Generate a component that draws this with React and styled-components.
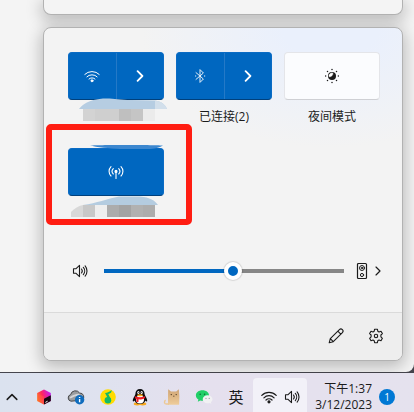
import React, { useState } from "react";
import styled, { createGlobalStyle, css } from "styled-components";

const GlobalStyle = createGlobalStyle`
  *, *::before, *::after { box-sizing: border-box; }
  body {
    margin: 0;
    overflow: hidden;
    color: #1b1b1b;
    font: 12px/16px "Open Sans", "Noto Sans CJK SC", sans-serif;
  }
  button, input { margin: 0; padding: 0; font: inherit; color: inherit; }
  svg { display: block; flex: none; }
`;

const Screen = styled.main`
  display: flex;
  flex-direction: column;
  height: 100vh;
  background: #45454d;
`;

const Desktop = styled.div`
  flex: 1;
  display: flex;
  flex-direction: column;
  gap: 12px;
  padding: 0 11px 11px 43px;
  margin-bottom: 1px;
  border-radius: 0 0 8px 0;
  background: #f4f4f4;
`;

const surface = css`
  border: 1px solid #b2b2b2;
  box-shadow: 0 4px 16px 2px rgba(0, 0, 0, 0.24);
`;

const UpperPanel = styled.div`
  ${surface}
  height: 15px;
  flex: none;
  border-top: 0;
  border-radius: 0 0 8px 8px;
  background: #f4f4f4;
`;

const Panel = styled.section`
  ${surface}
  flex: 1;
  display: flex;
  flex-direction: column;
  border-radius: 8px;
  background:
    radial-gradient(ellipse 190px 120px at 80% 0, #eaf0fc 25%, rgba(243, 243, 243, 0) 100%),
    #f3f3f3;
`;

const Tiles = styled.div`
  display: grid;
  grid-template-columns: repeat(3, 1fr);
  gap: 16px 12px;
  padding: 24px 22px 0 24px;
`;

const Cell = styled.div`
  position: relative;
  display: flex;
  flex-direction: column;
`;

const Tile = styled.div`
  display: flex;
  height: 48px;
  overflow: hidden;
  border-radius: 4px;
  border: 1px solid ${(p) => (p.$on ? "#0a6bc4" : "#e4e5e9")};
  border-bottom-color: ${(p) => (p.$on ? "#00407c" : "#cfd0d4")};
  background: ${(p) => (p.$on ? "#0067c0" : "#fbfcfe")};
  color: ${(p) => (p.$on ? "#ffffff" : "#1b1b1b")};
`;

const TileButton = styled.button`
  flex: 1;
  display: flex;
  align-items: center;
  justify-content: center;
  border: 0;
  background: none;

  & + & { border-left: 1px solid #2479c7; }
`;

const Label = styled.div`
  display: flex;
  align-items: center;
  justify-content: center;
  height: 32px;
  padding-top: 2px;
`;

const Smudge = styled.svg`
  position: absolute;
  left: 0;
  top: -4px;
  pointer-events: none;
`;

const Highlight = styled.div`
  position: absolute;
  inset: -24px -28px 3px -22px;
  border: 6px solid #ff1d12;
  border-radius: 5px;
  pointer-events: none;
`;

const VolumeRow = styled.div`
  flex: 1;
  display: flex;
  align-items: center;
  padding: 2px 20px 0 28px;
`;

const IconButton = styled.button`
  display: flex;
  align-items: center;
  justify-content: center;
  border: 0;
  background: none;
`;

const OutputButton = styled(IconButton)`
  gap: 6px;
`;

const Slider = styled.input`
  flex: 1;
  min-width: 0;
  height: 20px;
  margin: 0 12px 0 16px;
  appearance: none;
  background: linear-gradient(to right, #0067c0 54%, #868686 54%) center / 100% 4px no-repeat;

  &::-webkit-slider-thumb {
    appearance: none;
    width: 18px;
    height: 18px;
    border: 4px solid #ffffff;
    border-radius: 50%;
    background: #0067c0;
    box-shadow: 0 0 1px 1px rgba(0, 0, 0, 0.12);
  }
`;

const Footer = styled.footer`
  display: flex;
  align-items: center;
  justify-content: flex-end;
  gap: 24px;
  height: 48px;
  padding: 0 18px 2px 0;
  border-top: 1px solid #dadada;
  border-radius: 0 0 7px 7px;
  background: #eeeeee;
`;

const Taskbar = styled.footer`
  flex: none;
  display: flex;
  align-items: center;
  height: 39px;
  padding-top: 9px;
  background: linear-gradient(to right, #dbe2ef 0, #dfe2ef 25%, #e5e0ee 50%, #e5e2ee 100%);
`;

const Tray = styled.div`
  display: flex;
  align-items: center;
  gap: 8px;
`;

const TrayButton = styled(IconButton)`
  width: 24px;
  height: 24px;
  font-size: 15px;
`;

const StatusButton = styled(IconButton)`
  align-self: stretch;
  gap: 7px;
  width: 54px;
  margin: -4px 0 0 5px;
  padding-top: 4px;
  border-radius: 4px 4px 0 0;
  background: #f2f1f8;
`;

const Clock = styled.button`
  flex: 1;
  border: 0;
  background: none;
  text-align: right;
  white-space: nowrap;
`;

const ClockLine = styled.span`
  display: block;
`;

const Badge = styled.button`
  flex: none;
  width: 16px;
  height: 16px;
  margin: 0 19px 0 7px;
  border: 0;
  border-radius: 50%;
  background: #0078d4;
  color: #ffffff;
  font-size: 10px;
  line-height: 16px;
`;

const stroke = { fill: "none", stroke: "currentColor", strokeLinecap: "round", strokeLinejoin: "round" };

const WifiIcon = ({ weight = 1.2 }) => (
  <svg width="16" height="16" viewBox="0 0 16 16" {...stroke} strokeWidth={weight}>
    <path d="M.8 6.4a10.2 10.2 0 0 1 14.4 0M2.9 8.8a7.2 7.2 0 0 1 10.2 0M5 11a4.3 4.3 0 0 1 6 0" />
    <circle cx="8" cy="12.8" r="1" fill="currentColor" />
  </svg>
);

const ChevronIcon = ({ width = 8, height = 12, weight = 1.8 }) => (
  <svg width={width} height={height} viewBox="0 0 8 12" {...stroke} strokeWidth={weight}>
    <path d="M1.6 1.2 6.4 6l-4.8 4.8" />
  </svg>
);

const BluetoothIcon = () => (
  <svg width="14" height="16" viewBox="0 0 14 16" {...stroke} strokeWidth="1" opacity=".9">
    <path d="m3 4.6 7.4 6.4L7 14.4V1.6L10.4 5 3 11.4M2.4 8h.4M11.4 8h.4" />
  </svg>
);

const NightIcon = () => (
  <svg width="16" height="16" viewBox="0 0 16 16">
    <circle cx="8" cy="8" r="4" fill="#1b1b1b" />
    <path d="M5 8.6A3.1 3.1 0 0 1 8.800 5 3.100 3.100 0 0 1 5 8.600Z" fill="#fff" stroke="#fff" strokeWidth=".5" />
    <g fill="#1b1b1b">
      <circle cx="8" cy="1.6" r=".75" /><circle cx="8" cy="14.4" r=".75" />
      <circle cx="1.6" cy="8" r=".75" /><circle cx="14.4" cy="8" r=".75" />
      <circle cx="3.5" cy="3.5" r=".75" /><circle cx="12.5" cy="3.5" r=".75" />
      <circle cx="3.5" cy="12.5" r=".75" /><circle cx="12.5" cy="12.5" r=".75" />
    </g>
  </svg>
);

const HotspotIcon = () => (
  <svg width="16" height="16" viewBox="0 0 16 16" {...stroke} strokeWidth="1.1">
    <path d="M3 2.600a6.700 6.700 0 0 0 0 9.400M13 2.600a6.700 6.700 0 0 1 0 9.400M5.300 4.600a3.900 3.900 0 0 0 0 5.400M10.700 4.600a3.900 3.900 0 0 1 0 5.400M8 8v6.400" />
    <circle cx="8" cy="7.4" r="1" fill="currentColor" />
  </svg>
);

const SpeakerIcon = () => (
  <svg width="16" height="16" viewBox="0 0 16 16" {...stroke} strokeWidth="1.1">
    <path d="M1.5 5.8h2.3l3.7-3.4v11.2L3.8 10.2H1.5zM9.5 6a3.2 3.2 0 0 1 0 4M11.3 4.4a5.4 5.4 0 0 1 0 7.2M13.1 2.9a7.8 7.8 0 0 1 0 10.2" />
  </svg>
);

const OutputIcon = () => (
  <svg width="12" height="18" viewBox="0 0 12 18" {...stroke} strokeWidth="1">
    <rect x="1.5" y="1.5" width="9" height="15" rx="1" strokeWidth="1.2" />
    <circle cx="6" cy="6" r="2.5" /><circle cx="6" cy="6" r=".8" /><circle cx="6" cy="13" r="1.6" />
  </svg>
);

const PencilIcon = () => (
  <svg width="16" height="16" viewBox="0 0 16 16" {...stroke} strokeWidth="1.1">
    <path d="M1.2 14.8 2.3 10.7 11.4 1.6a2.1 2.1 0 0 1 3 3L5.3 13.7zM9.8 3.2l3 3M2.3 10.7l3 3" />
  </svg>
);

const GearIcon = () => (
  <svg width="16" height="16" viewBox="0 0 16 16" {...stroke} strokeWidth="1.1">
    <path d="M6.6 1.2h2.8l.4 2 1.2.7 2-.7 1.4 2.4-1.5 1.4v1.900l1.500 1.400-1.400 2.400-2-.7-1.200.7-.4 2H6.600l-.4-2-1.200-.7-2 .7-1.400-2.400 1.500-1.400V7L1.600 5.600 3 3.200l2 .7 1.200-.7z" />
    <circle cx="8" cy="8" r="1.7" />
  </svg>
);

const UpIcon = () => (
  <svg width="12" height="8" viewBox="0 0 12 8" {...stroke} strokeWidth="1.5">
    <path d="m1.2 6.4 4.8-4.8 4.8 4.8" />
  </svg>
);

const CubeIcon = () => (
  <svg width="16" height="16" viewBox="0 0 16 16">
    <defs>
      <linearGradient id="cube-face" x1="0" y1=".7" x2="1" y2=".3">
        <stop offset="0" stopColor="#ff7a1c" />
        <stop offset=".45" stopColor="#ff2660" />
        <stop offset="1" stopColor="#c31cf0" />
      </linearGradient>
    </defs>
    <path d="M8 .4 14.8 4v8L8 15.6 1.200 12V4z" fill="url(#cube-face)" />
    <path d="M1.200 4 8 7.600v8L1.200 12z" fill="#ff6a3a" opacity=".35" />
    <path d="M8 9.800 14.800 6.200V12L8 15.600z" fill="#16060f" />
    <path d="m9.4 13.4 2.200-1.200" stroke="#fff" strokeWidth="1" />
  </svg>
);

const CloudIcon = () => (
  <svg width="18" height="16" viewBox="0 0 18 16">
    <path d="M4 12.2A3.4 3.4 0 0 1 3.600 5.600 5 5 0 0 1 12.600 4a4 4 0 0 1 2.600 7.200z" fill="#9a9c9f" stroke="#48494c" strokeWidth="1" />
    <path d="M3 8.800c2.600-2 5.400-3 9.600-3.200" stroke="#d4d5d8" strokeWidth="1.6" fill="none" />
    <circle cx="12.6" cy="10.8" r="4.7" fill="#0f6cbd" />
    <path d="M12.600 10v3.200M12.600 8v1" stroke="#fff" strokeWidth="1.400" />
  </svg>
);

const MusicIcon = () => (
  <svg width="16" height="16" viewBox="0 0 16 16">
    <circle cx="8" cy="8" r="7.8" fill="#ffdc00" />
    <path d="M11.600.9c.3 2.200-1 3.500-3.300 4.100l2.700 5.500-1.800 1.200L5 4c2.600-.4 4.600-1.300 6.600-3.100Z" fill="#12b968" />
    <circle cx="7.900" cy="11.200" r="3.300" fill="#12b968" />
  </svg>
);

const PenguinIcon = () => (
  <svg width="16" height="18" viewBox="0 0 16 18">
    <ellipse cx="5.200" cy="16" rx="3.500" ry="1.400" fill="#f9a81a" />
    <ellipse cx="10.800" cy="16" rx="3.500" ry="1.400" fill="#f9a81a" />
    <path d="M8 1c3 0 4.600 2 4.600 5 0 1.500 2.800 4.400 2.600 7-.1 1-1.200.2-1.800-.5-.8 2.500-2.600 3.500-5.400 3.500s-4.600-1-5.400-3.500C2 13.200.9 14 .8 13 .6 10.400 3.400 7.500 3.400 6c0-3 1.600-5 4.600-5z" fill="#0c0c0e" />
    <ellipse cx="8" cy="11.600" rx="4" ry="4" fill="#fff" />
    <path d="M3.200 8.200c3 1.500 6.600 1.500 9.600 0l.4 1.700c-3 1.500-5 1.600-6.600 1.400l-.2 2.700H4.400l.1-3.100-1.600-.7z" fill="#ee1c25" />
    <ellipse cx="6.400" cy="4.500" rx="1.100" ry="1.500" fill="#fff" />
    <ellipse cx="9.600" cy="4.500" rx="1.100" ry="1.500" fill="#fff" />
    <circle cx="6.800" cy="4.600" r=".5" /><circle cx="9.200" cy="4.600" r=".5" />
    <ellipse cx="8" cy="7.200" rx="3" ry="1" fill="#f9a81a" />
  </svg>
);

const CatIcon = () => (
  <svg width="18" height="18" viewBox="0 0 18 18">
    <defs>
      <linearGradient id="cat-fur" x1="0" y1="0" x2="0" y2="1">
        <stop offset="0" stopColor="#cfa473" /><stop offset="1" stopColor="#efcd9b" />
      </linearGradient>
    </defs>
    <path d="M5.200 1.200 8 3.600h5.200l2.600-2.400.6 7.200-.3 8.400H5V8.400z" fill="url(#cat-fur)" />
    <path d="M6 16H3.200C1 16 1 13.200 2.600 12.200" fill="none" stroke="#ecc894" strokeWidth="1.400" />
    <circle cx="8.300" cy="6.600" r=".7" fill="#4d3822" /><circle cx="13.200" cy="6.600" r=".7" fill="#4d3822" />
    <path d="M10 8.200h1.500" stroke="#6b4b2e" strokeWidth=".8" />
  </svg>
);

const ChatIcon = () => (
  <svg width="18" height="16" viewBox="0 0 18 16">
    <path d="M7.400 1.300c3.800 0 6.600 2.200 6.600 5.200s-2.800 5.200-6.600 5.200c-.8 0-1.500-.1-2.200-.3l-2.400 1.400.6-2.200C1.800 9.600.9 8.200.9 6.500c0-3 2.800-5.200 6.500-5.200Z" fill="#22cf68" />
    <circle cx="5.200" cy="5.200" r=".8" fill="#126a38" /><circle cx="9.600" cy="5.200" r=".8" fill="#126a38" />
    <path d="M12.600 6.200c2.800 0 4.900 1.800 4.900 4.100 0 1.200-.6 2.200-1.600 3l.4 1.500-1.700-.9c-.6.3-1.300.4-2 .4-2.800 0-4.900-1.800-4.900-4s2.100-4.100 4.900-4.100Z" fill="#f1f1f3" />
    <circle cx="11" cy="9.300" r=".6" fill="#8c8c90" /><circle cx="14.200" cy="9.300" r=".6" fill="#8c8c90" />
  </svg>
);

const NETWORK_BLOCKS = ["#d3d3d3", "#cfcfcf", "#cfcfcf", "#bfbfbf", "#c5c5c5", "#ebebeb"];
const HOTSPOT_BLOCKS = ["#c8c8c8", "#eeeeee", "#acacac", "#a3a3a3", "#b1b1b1", "#adadad"];

const Blocks = ({ fills }) =>
  fills.map((fill, i) => (
    <rect key={i} x={15 + i * 12} y="57" width="12" height="12" fill={fill} shapeRendering="crispEdges" />
  ));

const NetworkSmudge = () => (
  <Smudge width="102" height="76" viewBox="0 -4 102 76" aria-hidden="true">
    <Blocks fills={NETWORK_BLOCKS} />
    <path d="M11 57c4-5 9-9 24-10.500 10-.5 16 1.300 28 1.500l24 .5c6 1 10 3.500 12 8.500z" fill="#b6cde2" />
    <path d="M87 48.500c6 1 10 3.500 12 8.500H87z" fill="#d2dfeb" />
  </Smudge>
);

const HotspotSmudge = () => (
  <Smudge width="96" height="76" viewBox="0 -4 96 76" aria-hidden="true">
    <path d="M22 -2.500C26 -3.300 90 -3.300 95 -2.500 92 -.8 88 .9 82 .9H52C42 .4 28 -.8 22 -2.500Z" fill="#3c87cf" />
    <Blocks fills={HOTSPOT_BLOCKS} />
    <path d="M3 69v-5c3-3 7-6 12-7v12z" fill="#d8d8d8" />
    <path d="M15 57c14-2 24-6 36-8.500h21c10 1 15 4 18 8.500z" fill="#b4cce0" />
  </Smudge>
);

export default function App() {
  const [volume, setVolume] = useState(54);
  return (
    <>
      <GlobalStyle />
      <Screen>
        <Desktop>
          <UpperPanel />
          <Panel aria-label="快速设置">
            <Tiles>
              <Cell>
                <Tile $on>
                  <TileButton aria-label="Wi-Fi"><WifiIcon weight={1} /></TileButton>
                  <TileButton aria-label="管理 Wi-Fi"><ChevronIcon /></TileButton>
                </Tile>
                <Label />
                <NetworkSmudge />
              </Cell>
              <Cell>
                <Tile $on>
                  <TileButton aria-labelledby="bluetooth-label"><BluetoothIcon /></TileButton>
                  <TileButton aria-label="管理蓝牙"><ChevronIcon /></TileButton>
                </Tile>
                <Label id="bluetooth-label">已连接(2)</Label>
              </Cell>
              <Cell>
                <Tile>
                  <TileButton aria-labelledby="night-label"><NightIcon /></TileButton>
                </Tile>
                <Label id="night-label">夜间模式</Label>
              </Cell>
              <Cell>
                <Tile $on>
                  <TileButton aria-label="移动热点"><HotspotIcon /></TileButton>
                </Tile>
                <Label />
                <HotspotSmudge />
                <Highlight />
              </Cell>
            </Tiles>
            <VolumeRow>
              <IconButton aria-label="静音"><SpeakerIcon /></IconButton>
              <Slider
                type="range"
                aria-label="音量"
                value={volume}
                onChange={(e) => setVolume(Number(e.target.value))}
                style={{ backgroundImage: `linear-gradient(to right, #0067c0 ${volume}%, #868686 ${volume}%)` }}
              />
              <OutputButton aria-label="声音输出">
                <OutputIcon />
                <ChevronIcon width={8} height={10} weight={1.4} />
              </OutputButton>
            </VolumeRow>
            <Footer>
              <IconButton aria-label="编辑"><PencilIcon /></IconButton>
              <IconButton aria-label="设置"><GearIcon /></IconButton>
            </Footer>
          </Panel>
        </Desktop>
        <Taskbar>
          <Tray>
            <TrayButton aria-label="显示隐藏的图标"><UpIcon /></TrayButton>
            <TrayButton aria-label="Toolbox"><CubeIcon /></TrayButton>
            <TrayButton aria-label="OneDrive"><CloudIcon /></TrayButton>
            <TrayButton aria-label="QQ音乐"><MusicIcon /></TrayButton>
            <TrayButton aria-label="QQ"><PenguinIcon /></TrayButton>
            <TrayButton aria-label="猫"><CatIcon /></TrayButton>
            <TrayButton aria-label="微信"><ChatIcon /></TrayButton>
            <TrayButton>英</TrayButton>
          </Tray>
          <StatusButton aria-label="网络和音量">
            <WifiIcon />
            <SpeakerIcon />
          </StatusButton>
          <Clock>
            <ClockLine>下午1:37</ClockLine>
            <ClockLine>3/12/2023</ClockLine>
          </Clock>
          <Badge aria-label="1 条通知">1</Badge>
        </Taskbar>
      </Screen>
    </>
  );
}
